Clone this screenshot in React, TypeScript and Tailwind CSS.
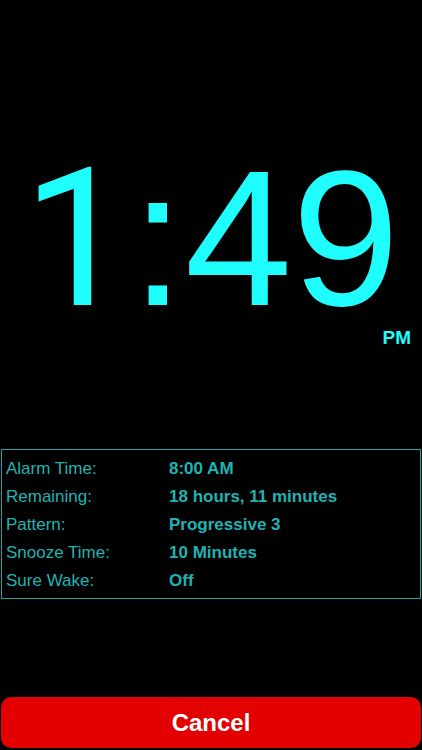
export default function App() {
    const rows = [
        { label: 'Alarm Time:', value: '8:00 AM' },
        { label: 'Remaining:', value: '18 hours, 11 minutes' },
        { label: 'Pattern:', value: 'Progressive 3' },
        { label: 'Snooze Time:', value: '10 Minutes' },
        { label: 'Sure Wake:', value: 'Off' },
    ];

    return (
        <div
            className="w-[422px] h-[750px] bg-black flex flex-col overflow-hidden"
            style={{ fontFamily: '"Liberation Sans", Arial, sans-serif' }}
        >
            {/* Clock: the "1" borrows Roboto for its footless stem, the rest stays Liberation */}
            <div className="pt-[153px]">
                <div className="text-center text-[193px] leading-[170px] text-[#1ffdfd]">
                    <span className="font-['Roboto',sans-serif]">1</span>:49
                </div>
                <div className="mt-[4px] pr-[11px] text-right text-[19px] leading-none font-bold text-[#1ffdfd]">PM</div>
            </div>

            {/* Alarm info */}
            <div className="mt-[102px] mx-[1px] border border-[#1aa5a5] pt-[5px] pb-[3px]">
                {rows.map(row => (
                    <div key={row.label} className="flex h-[28px] items-center text-[17px] leading-[28px] text-[#20b3b3]">
                        <span className="w-[167px] pl-[4px]">{row.label}</span>
                        <span className="font-bold">{row.value}</span>
                    </div>
                ))}
            </div>

            {/* Cancel */}
            <div className="mt-auto px-[1px] pb-[2px]">
                <button className="w-full h-[51px] rounded-[10px] bg-[#e30000] text-white text-[24px] font-bold leading-none">
                    Cancel
                </button>
            </div>
        </div>
    );
}
